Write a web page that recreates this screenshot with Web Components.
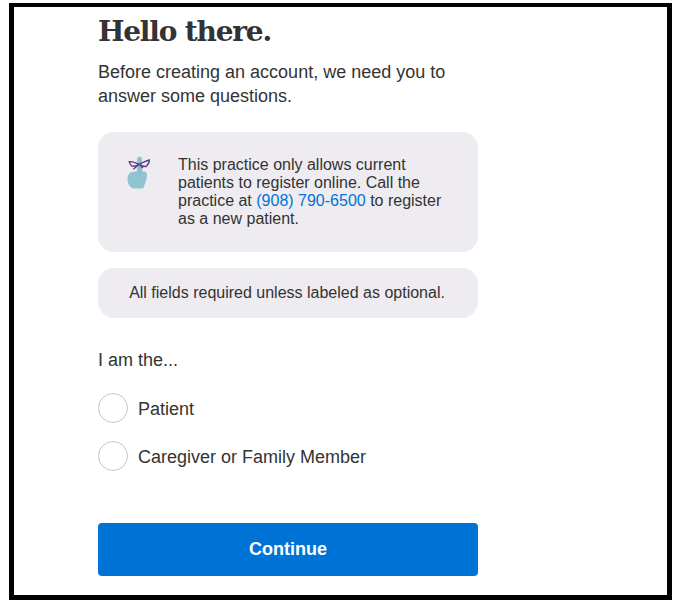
<!DOCTYPE html>
<html>
<head>
<meta charset="utf-8">
<style>
  html, body { margin: 0; background: #fff; }
  body { font-family: "Liberation Sans", Arial, sans-serif; color: #333; }
</style>
</head>
<body>
<signup-frame>
  <intro-header heading="Hello there.">Before creating an account, we need you to answer some questions.</intro-header>
  <notice-box with-icon>This practice only allows current patients to register online. Call the practice at <a href="#">(908) 790-6500</a> to register as a new patient.</notice-box>
  <notice-box centered>All fields required unless labeled as optional.</notice-box>
  <role-picker legend="I am the...">
    <radio-row>Patient</radio-row>
    <radio-row>Caregiver or Family Member</radio-row>
  </role-picker>
  <primary-button>Continue</primary-button>
</signup-frame>

<script>
class SignupFrame extends HTMLElement {
  constructor() {
    super();
    this.attachShadow({ mode: "open" }).innerHTML = `
      <style>
        :host {
          display: block;
          box-sizing: border-box;
          width: 663px;
          height: 597px;
          margin: 3px 0 0 9px;
          border: solid #000;
          border-width: 4px 5px 5px;
          padding: 0 0 0 84px;
          overflow: hidden;
        }
        .col { width: 380px; display: flex; flex-direction: column; }
      </style>
      <div class="col"><slot></slot></div>`;
  }
}

class IntroHeader extends HTMLElement {
  constructor() {
    super();
    this.attachShadow({ mode: "open" }).innerHTML = `
      <style>
        :host { display: block; padding-top: 5px; }
        h1 {
          margin: 0 0 8px;
          font: bold 28px/40px "DejaVu Serif", "Liberation Serif", serif;
          letter-spacing: -1.200px;
          color: #333;
        }
        p { margin: 0; font-size: 18px; line-height: 24px; color: #333; }
      </style>
      <h1></h1>
      <p><slot></slot></p>`;
  }
  connectedCallback() {
    this.shadowRoot.querySelector("h1").textContent = this.getAttribute("heading");
  }
}

class NoticeBox extends HTMLElement {
  constructor() {
    super();
    this.attachShadow({ mode: "open" }).innerHTML = `
      <style>
        :host {
          display: flex;
          background: #eeecf0;
          border-radius: 16px;
          font-size: 16px;
          line-height: 18px;
          color: #333;
          margin-top: 16px;
          padding: 16px 22px 16px 20px;
          justify-content: center;
          text-align: center;
        }
        :host([with-icon]) {
          margin-top: 24px;
          padding: 24px 36px 24px 26px;
          justify-content: flex-start;
          text-align: left;
          gap: 28px;
        }
        svg { display: block; flex: none; width: 26px; height: 34px; }
        ::slotted(a) { color: #0074d6; text-decoration: none; }
      </style>
      <span id="icon"></span>
      <div><slot></slot></div>`;
  }
  connectedCallback() {
    if (this.hasAttribute("with-icon")) {
      this.shadowRoot.getElementById("icon").innerHTML = `
        <svg viewBox="0 0 26 34">
          <path d="M13 3C13.300 -.5 17.800 -.5 18 3L18.300 15.500C21 15.500 23 16 23 18C23 22 22 26 20.500 29C20 31 19.500 32 19 32.500L9 32.500C5.500 31 3.500 27 3.500 23C3.500 20 4.500 17.500 6.500 16.500C9 15.500 11 15.500 13 15.500Z" fill="#8fc4d0"/>
          <path d="M15.800 3V22" stroke="#78b3c0" stroke-width=".6" fill="none"/>
          <path d="M15 8.300C12 7 8.500 5.200 5.300 5.700C5.500 7.500 6.500 9 8 10.300C10.500 10.300 13 9.500 15 8.300ZM15 8.300C17.500 7.500 21.500 4.800 25.300 4C25.300 6.500 24 9 22 10.500C19.500 10.800 17 9.500 15 8.300ZM15 8.300L9.300 13.300M15 8.300L19 12" stroke="#5f3f87" stroke-width="1.400" fill="none"/>
        </svg>`;
    } else {
      this.shadowRoot.getElementById("icon").remove();
    }
  }
}

class RolePicker extends HTMLElement {
  constructor() {
    super();
    this.attachShadow({ mode: "open" }).innerHTML = `
      <style>
        :host { display: block; margin-top: 30px; }
        .legend { font-size: 18px; line-height: 24px; margin-bottom: 21px; }
        .rows { display: flex; flex-direction: column; gap: 16px; }
      </style>
      <div class="legend"></div>
      <div class="rows"><slot></slot></div>`;
  }
  connectedCallback() {
    this.shadowRoot.querySelector(".legend").textContent = this.getAttribute("legend");
  }
}

class RadioRow extends HTMLElement {
  constructor() {
    super();
    this.attachShadow({ mode: "open" }).innerHTML = `
      <style>
        :host { display: flex; align-items: center; gap: 10px; font-size: 18px; line-height: 32px; color: #333; }
        .dot { box-sizing: border-box; width: 30px; height: 30px; margin-bottom: 2px; border: 1px solid #c4c4c4; border-radius: 50%; background: #fff; }
      </style>
      <span class="dot"></span>
      <span><slot></slot></span>`;
  }
}

class PrimaryButton extends HTMLElement {
  constructor() {
    super();
    this.attachShadow({ mode: "open" }).innerHTML = `
      <style>
        :host {
          display: flex;
          align-items: center;
          justify-content: center;
          height: 53px;
          margin-top: 50px;
          border-radius: 4px;
          background: #0074d6;
          color: #fff;
          font-size: 18px;
          font-weight: bold;
        }
      </style>
      <slot></slot>`;
  }
}

customElements.define("signup-frame", SignupFrame);
customElements.define("intro-header", IntroHeader);
customElements.define("notice-box", NoticeBox);
customElements.define("role-picker", RolePicker);
customElements.define("radio-row", RadioRow);
customElements.define("primary-button", PrimaryButton);
</script>
</body>
</html>
